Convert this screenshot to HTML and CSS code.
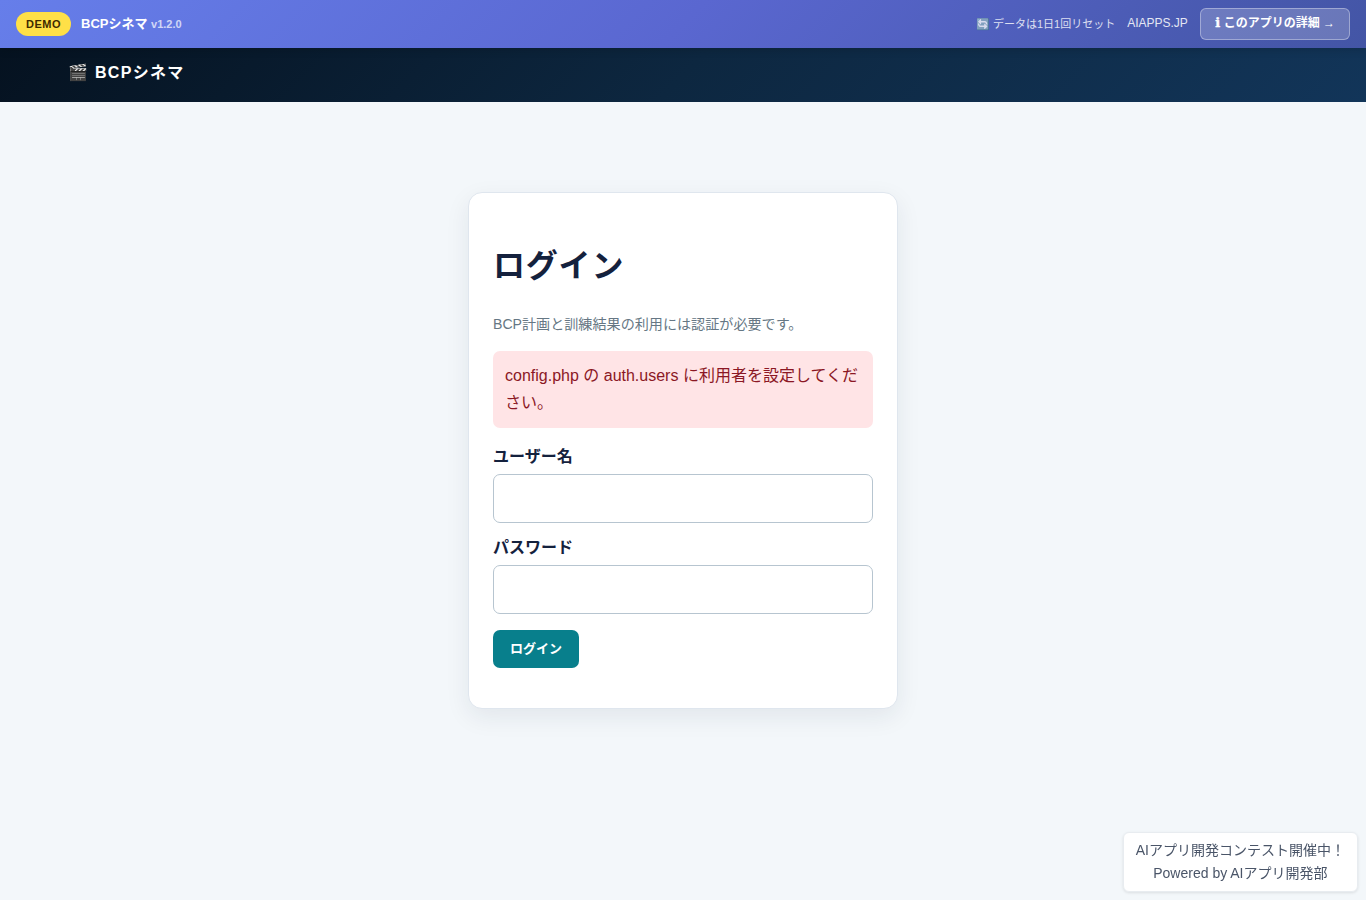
FILE: index.html
```html
<!DOCTYPE html>
<html lang="ja">
<head>
<meta charset="utf-8">
<title>BCPシネマ</title>
<link rel="stylesheet" href="styles.css">
</head>
<body>
<div class="demo-bar">
  <div class="demo-left">
    <span class="demo-badge">DEMO</span>
    <span class="demo-name">BCPシネマ <small>v1.2.0</small></span>
  </div>
  <div class="demo-right">
    <span class="demo-reset">🔄 データは1日1回リセット</span>
    <a class="demo-site" href="#">AIAPPS.JP</a>
    <a class="demo-detail" href="#"><span class="info">ℹ</span> このアプリの詳細 →</a>
  </div>
</div>

<header class="site-header">
  <a class="brand" href="#">🎬 BCPシネマ</a>
</header>

<main class="login">
  <section class="card">
    <h1>ログイン</h1>
    <p class="muted">BCP計画と訓練結果の利用には認証が必要です。</p>
    <div class="alert">config.php の auth.users に利用者を設定してください。</div>
    <form method="post" action="#">
      <label for="username">ユーザー名</label>
      <input id="username" name="username" type="text">
      <label for="password">パスワード</label>
      <input id="password" name="password" type="password">
      <button type="submit">ログイン</button>
    </form>
  </section>
</main>

<div class="powered">
  <a href="#">AIアプリ開発コンテスト開催中！</a>
  <a href="#">Powered by AIアプリ開発部</a>
</div>
</body>
</html>
```

FILE: styles.css
```css
* { box-sizing: border-box; }
body { margin: 0; min-height: 100vh; background: #f3f7fa; color: #14213d; font: 16px/1.7 "Liberation Sans", "Noto Sans CJK JP", sans-serif; }
a { color: inherit; text-decoration: none; }

.demo-bar { display: flex; align-items: center; justify-content: space-between; position: relative; height: 48px; padding: 0 16px; background: linear-gradient(135deg, #667eea 0%, #5a67d0 50%, #4355a5 100%); box-shadow: 0 2px 8px rgba(0, 0, 0, .15); color: #fff; font-size: 13px; line-height: 1.5; }
.demo-left { display: flex; align-items: center; gap: 10px; }
.demo-right { display: flex; align-items: center; gap: 12px; }
.demo-badge { padding: 4px 10px; border-radius: 20px; background: #ffe047; color: #3d2a00; font-size: 11px; font-weight: bold; letter-spacing: .5px; }
.demo-name { font-weight: bold; }
.demo-name small { font-size: 11px; opacity: .7; }
.demo-reset { font-size: 11px; opacity: .8; }
.demo-site { padding-bottom: 2px; font-size: 12px; opacity: .85; }
.demo-detail { height: 32px; padding: 5px 14px; border: 1px solid rgba(255, 255, 255, .35); border-radius: 6px; background: rgba(255, 255, 255, .2); font-size: 12px; font-weight: bold; }
.demo-detail .info { font-family: "DejaVu Sans", sans-serif; font-size: 13px; line-height: 1; -webkit-text-stroke: .4px #fff; letter-spacing: .5px; }

.site-header { height: 54px; padding: 11px 68px; background: linear-gradient(135deg, #051220, #0d2740 50%, #123559); color: #fff; }
.brand { font-weight: bold; letter-spacing: 1.28px; }

.login { padding-top: 90px; }
.card { width: 430px; margin: 0 auto; padding: 24px 24px 40px; border: 1px solid #dfe6ee; border-radius: 14px; background: #fff; box-shadow: 0 8px 25px rgba(20, 33, 61, .08); }
.card h1 { margin: 22.44px 0 19.44px; font-size: 32px; letter-spacing: .8px; }
.muted { margin: 0 0 15px; color: #667784; font-size: 14.1px; line-height: 23px; }
.alert { margin-bottom: 15px; padding: 11px 12px; border-radius: 7px; background: #ffe4e6; color: #8b1724; }
.card label { display: block; margin-bottom: 4px; font-weight: bold; }
.card input { display: block; width: 100%; height: 49px; margin-bottom: 11px; padding: 10px; border: 1px solid #b7c5d0; border-radius: 7px; background: #fff; font: inherit; }
.card button { display: block; height: 38px; margin-top: 16px; padding: 0 17px 3px; border: 0; border-radius: 7px; background: #087f8c; color: #fff; font: bold 13px "Liberation Sans", "Noto Sans CJK JP", sans-serif; }

.powered { position: fixed; right: 8px; bottom: 8px; padding: 6px 12px; border: 1px solid #e8ecf0; border-radius: 6px; background: #fff; box-shadow: 0 1px 3px rgba(0, 0, 0, .1); color: #4a5568; font-size: 14px; line-height: 23px; text-align: center; }
.powered a { display: block; }
```
